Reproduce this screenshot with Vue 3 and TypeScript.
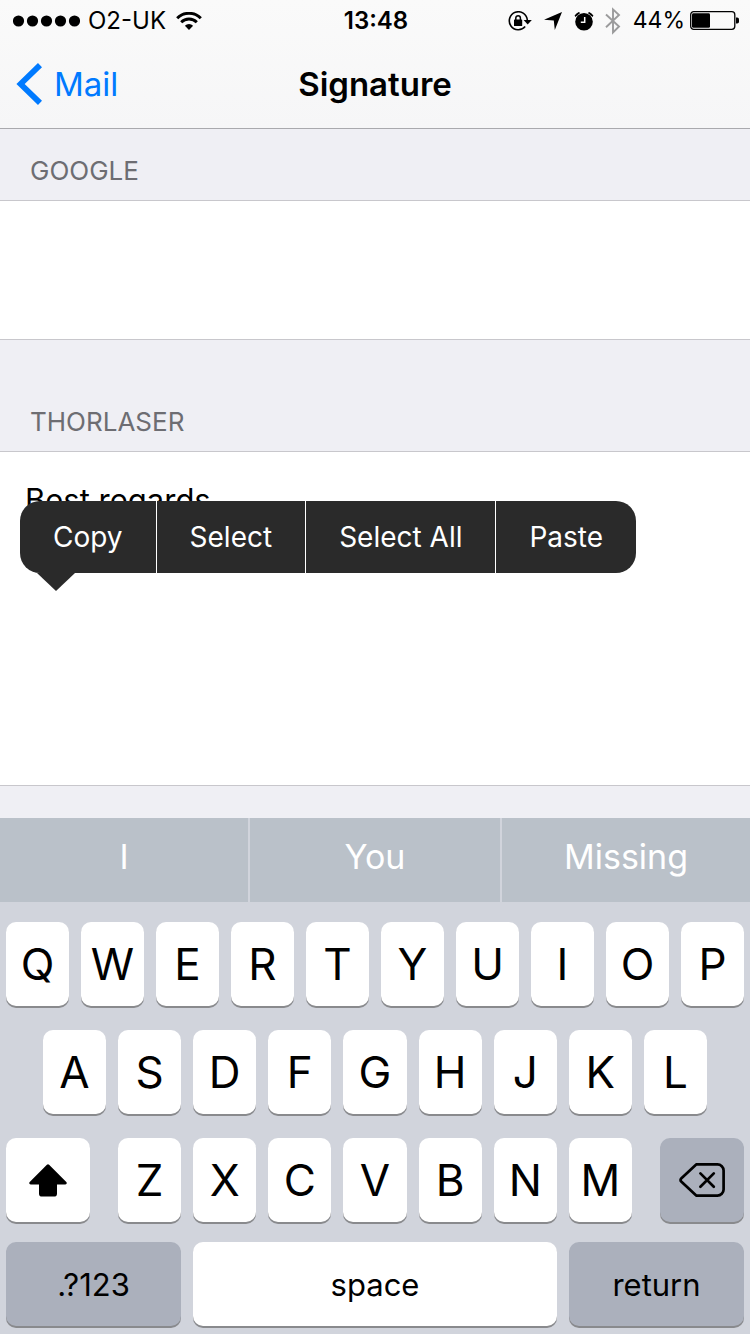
<script setup lang="ts">
import { ref } from 'vue'

interface Account {
  id: string
  name: string
  rows: number
  signature: string
  menuOpen: boolean
}

const accounts = ref<Account[]>([
  { id: 'google', name: 'Google', rows: 2, signature: '', menuOpen: false },
  { id: 'thorlaser', name: 'Thorlaser', rows: 7, signature: 'Best regards', menuOpen: true },
])

const menuItems: string[] = ['Copy', 'Select', 'Select All', 'Paste']
const suggestions: string[] = ['I', 'You', 'Missing']
const topRow: string[] = [...'QWERTYUIOP']
const homeRow: string[] = [...'ASDFGHJKL']
const bottomRow: string[] = [...'ZXCVBNM']
</script>

<template>
  <div class="screen">
    <header class="top">
      <div class="status">
        <div class="status-side">
          <svg class="signal" width="67" height="12" viewBox="0 0 67 12" aria-label="Signal strength">
            <circle v-for="n in 5" :key="n" :cx="n * 14 - 8.5" cy="6" r="5.6" />
          </svg>
          <span class="carrier">O2-UK</span>
          <svg class="wifi" width="26" height="18" viewBox="0 0 26 18" aria-label="Wi-Fi">
            <path d="M1.2 6.2a16.7 16.7 0 0 1 23.6 0" fill="none" stroke="#000" stroke-width="3" />
            <path d="M5.2 10.3a11 11 0 0 1 15.6 0" fill="none" stroke="#000" stroke-width="2.9" />
            <path d="M13 18 8.9 13.8a5.8 5.8 0 0 1 8.2 0z" />
          </svg>
        </div>
        <time class="clock">13:48</time>
        <div class="status-side right">
          <svg class="lock" width="24" height="20" viewBox="0 0 24 20" aria-label="Orientation lock">
            <path d="M17.2 15.6A9 9 0 1 1 19.3 9" fill="none" stroke="#000" stroke-width="1.6" />
            <path d="M15.6 9h8.2l-4.1 4.4z" />
            <rect x="6" y="8.4" width="8.2" height="6.6" rx=".6" />
            <path d="M7.8 9V7a2.3 2.3 0 0 1 4.6 0v2" fill="none" stroke="#000" stroke-width="1.5" />
          </svg>
          <svg class="location" width="18" height="18" viewBox="0 0 18 18" aria-label="Location">
            <path d="M18 0 10.8 18 9.8 8.6 0 7.8z" />
          </svg>
          <svg class="alarm" width="20" height="20" viewBox="0 0 20 20" aria-label="Alarm">
            <circle cx="10" cy="10.8" r="8.8" />
            <path d="M.6 4.6A11 11 0 0 1 4.8 1l1.4.9L1.4 6zM19.4 4.6A11 11 0 0 0 15.2 1l-1.4.9L18.6 6z" />
            <path d="M10.7 6v5.3H6.8" fill="none" stroke="#fafafa" stroke-width="1.5" />
          </svg>
          <svg class="bluetooth" width="16" height="28" viewBox="0 0 16 28" aria-label="Bluetooth">
            <path d="M1 7.5 14 19.5 8 25.4V2.4L14 8 1 20.2" fill="none" stroke="#9b9b9c" stroke-width="1.9" />
          </svg>
          <span class="percent">44%</span>
          <svg class="battery" width="49" height="19" viewBox="0 0 49 19" aria-label="Battery">
            <rect x=".7" y=".7" width="44.1" height="17.6" rx="3" fill="none" stroke="#000" stroke-width="1.3" />
            <rect x="2" y="2.2" width="18" height="14.6" rx="1.4" />
            <path d="M46 6.5h1.2a1.8 1.8 0 0 1 1.8 1.8v2.4a1.8 1.8 0 0 1-1.8 1.8H46z" />
          </svg>
        </div>
      </div>
      <nav class="nav">
        <a class="back" href="#mail">
          <svg width="26" height="42" viewBox="0 0 26 42" aria-hidden="true">
            <path d="M24 2.2 4.6 21 24 39.8" fill="none" stroke="#007aff" stroke-width="5.8" />
          </svg>
          <span>Mail</span>
        </a>
        <h1>Signature</h1>
      </nav>
    </header>

    <main class="content">
      <section v-for="account in accounts" :key="account.id" class="group">
        <label class="group-title" :for="account.id">{{ account.name }}</label>
        <div class="cell">
          <textarea :id="account.id" v-model="account.signature" :rows="account.rows" spellcheck="false"></textarea>
          <div v-if="account.menuOpen" class="menu" role="menu">
            <button v-for="item in menuItems" :key="item" type="button" role="menuitem">{{ item }}</button>
            <svg class="menu-tip" width="38" height="18" viewBox="0 0 38 18" aria-hidden="true">
              <path d="M0 0h38L19 18z" fill="#2a2a2a" />
            </svg>
          </div>
        </div>
      </section>
    </main>

    <div class="keyboard">
      <div class="suggestions">
        <button v-for="word in suggestions" :key="word" type="button">{{ word }}</button>
      </div>
      <div class="keys">
        <div class="row row-top">
          <button v-for="key in topRow" :key="key" class="key" type="button">{{ key }}</button>
        </div>
        <div class="row row-home">
          <button v-for="key in homeRow" :key="key" class="key" type="button">{{ key }}</button>
        </div>
        <div class="row row-bottom">
          <button class="key" type="button" aria-label="Shift">
            <svg width="38" height="33" viewBox="0 0 38 33" aria-hidden="true">
              <path d="M17.9.8a1.5 1.5 0 0 1 2.2 0L37.3 18c.9.9.4 2.6-1 2.6H28V29.4a3.2 3.2 0 0 1-3.2 3.2H13.2a3.2 3.2 0 0 1-3.2-3.2V20.6H1.7c-1.4 0-1.9-1.7-1-2.6z" />
            </svg>
          </button>
          <div class="row row-letters">
            <button v-for="key in bottomRow" :key="key" class="key" type="button">{{ key }}</button>
          </div>
          <button class="key dark" type="button" aria-label="Delete">
            <svg width="46" height="34" viewBox="0 0 46 34" fill="none" stroke="#000" aria-hidden="true">
              <path d="M17.2 1.4H38.4a6.2 6.2 0 0 1 6.2 6.2V26.4a6.2 6.2 0 0 1-6.2 6.2H17.2L2.2 18.6a2.2 2.2 0 0 1 0-3.2z" stroke-width="2.7" stroke-linejoin="round" />
              <path d="m21.4 10.4 13.4 13.4M34.8 10.4 21.4 23.8" stroke-width="2.7" stroke-linecap="round" />
            </svg>
          </button>
        </div>
        <div class="row row-space">
          <button class="key dark word" type="button">.?123</button>
          <button class="key word" type="button">space</button>
          <button class="key dark word" type="button">return</button>
        </div>
      </div>
    </div>
  </div>
</template>

<style>
body {
  margin: 0;
  background: #efeff4;
}
</style>

<style scoped>
.screen {
  display: flex;
  flex-direction: column;
  min-height: 100vh;
  background: #efeff4;
  color: #000;
  font-family: Inter, "Liberation Sans", sans-serif;
}

button {
  margin: 0;
  padding: 0;
  border: 0;
  font: inherit;
  color: inherit;
  background: none;
}

svg {
  display: block;
  flex: none;
}

.top {
  background: linear-gradient(#fafafa, #f6f6f7);
  border-bottom: 1px solid #a9a9ad;
}

.status {
  display: grid;
  grid-template-columns: 1fr auto 1fr;
  align-items: center;
  height: 41px;
  padding: 0 11px 0 13px;
  font-size: 24px;
  line-height: 41px;
}

.status-side {
  display: flex;
  align-items: center;
}

.right {
  justify-content: flex-end;
}

.carrier {
  margin: 0 10px 0 8px;
}

.clock {
  font-weight: 600;
}

.location {
  margin-left: 12px;
}

.alarm {
  margin-left: 12px;
}

.bluetooth {
  margin-left: 11px;
}

.percent {
  margin: 0 5px 0 12px;
  font-size: 23px;
}

.nav {
  display: grid;
  grid-template-columns: 1fr auto 1fr;
  align-items: center;
  height: 85px;
  padding: 0 16px 2px;
  font-size: 33px;
}

.back {
  display: flex;
  align-items: center;
  gap: 12px;
  color: #007aff;
  text-decoration: none;
}

h1 {
  margin: 0;
  font-size: 33px;
  font-weight: 600;
}

.content {
  flex: 1;
}

.group-title {
  display: block;
  padding: 26px 30px 13px;
  color: #6d6d72;
  font-size: 26px;
  line-height: 32px;
  text-transform: uppercase;
}

.group + .group .group-title {
  padding-top: 66px;
}

.cell {
  position: relative;
  border-top: 1px solid #c8c7cc;
  border-bottom: 1px solid #c8c7cc;
  background: #fff;
}

textarea {
  display: block;
  box-sizing: border-box;
  width: 100%;
  margin: 0;
  padding: 28px 25px 32px;
  border: 0;
  outline: 0;
  resize: none;
  overflow: hidden;
  background: none;
  color: #000;
  font: inherit;
  font-size: 31px;
  line-height: 39px;
}

.menu {
  position: absolute;
  top: 49px;
  left: 20px;
  display: flex;
  border-radius: 20px;
  background: #2a2a2a;
  color: #fff;
  font-size: 28px;
  line-height: 72px;
}

.menu button {
  padding: 0 33px;
}

.menu button + button {
  border-left: 1px solid #fff;
}

.menu-tip {
  position: absolute;
  top: 100%;
  left: 17px;
}

.suggestions {
  display: grid;
  grid-template-columns: 248fr 250fr 248fr;
  gap: 2px;
  color: #fff;
  font-size: 34px;
  line-height: 78px;
}

.suggestions button {
  padding-bottom: 6px;
  background: #bac1c9;
}

.keyboard {
  background: #d1d4dc;
}

.keys {
  display: grid;
  gap: 24px;
  padding: 20px 6px 8px;
}

.row {
  display: grid;
  gap: 12px;
}

.row-top {
  grid-template-columns: repeat(10, 1fr);
}

.row-home {
  grid-template-columns: repeat(9, 1fr);
  padding: 0 5%;
}

.row-bottom {
  grid-template-columns: 84fr 514fr 84fr;
  gap: 28px;
}

.row-letters {
  grid-template-columns: repeat(7, 1fr);
}

.row-space {
  grid-template-columns: 175fr 364fr 175fr;
  margin-top: -4px;
}

.key {
  display: flex;
  align-items: center;
  justify-content: center;
  height: 84px;
  border-radius: 10px;
  background: #fff;
  box-shadow: 0 2px 0 #898a8d;
  font-size: 44px;
}

.dark {
  background: #abb0bc;
}

.word {
  font-size: 31px;
}
</style>
